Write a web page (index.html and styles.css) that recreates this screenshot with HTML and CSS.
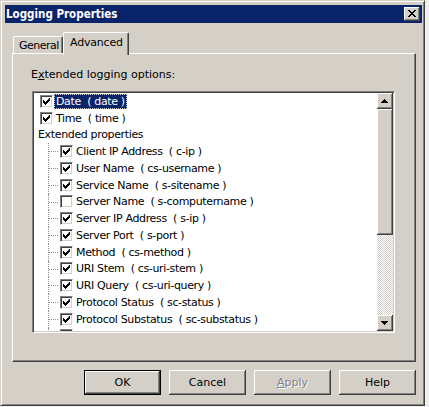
FILE: index.html
```html
<!DOCTYPE html>
<html>
<head>
<meta charset="utf-8">
<link rel="stylesheet" href="styles.css">
</head>
<body>
<svg class="defs" width="0" height="0">
  <symbol id="chk" viewBox="0 0 7 7"><path d="M6 0h1v3h-1v1h-1v1h-1v1h-1v1h-1v-1h-1v-1h-1v-3h1v1h1v1h1v-1h1v-1h1z"/></symbol>
</svg>
<div class="window">
  <div class="titlebar">
    <span class="title">Logging Properties</span>
    <span class="close"><svg width="8" height="7" viewBox="0 0 8 7"><path d="M0 0h2v1h1v1h2v-1h1v-1h2v1h-1v1h-1v1h-1v1h1v1h1v1h1v1h-2v-1h-1v-1h-2v1h-1v1h-2v-1h1v-1h1v-1h1v-1h-1v-1h-1v-1h-1z"/></svg></span>
  </div>
  <div class="content">
    <div class="tabs">
      <div class="tab">General</div>
      <div class="tab active">Advanced</div>
    </div>
    <div class="panel">
      <div class="label">E<u>x</u>tended logging options:</div>
      <div class="treebox">
        <div class="tree">
          <div class="row top"><span class="cb"><svg><use href="#chk"/></svg></span><span class="txt sel">Date  ( date )</span></div>
          <div class="row top"><span class="cb"><svg><use href="#chk"/></svg></span><span class="txt">Time  ( time )</span></div>
          <div class="row group"><span class="txt">Extended properties</span></div>
          <div class="row child"><span class="cb"><svg><use href="#chk"/></svg></span><span class="txt">Client IP Address  ( c-ip )</span></div>
          <div class="row child"><span class="cb"><svg><use href="#chk"/></svg></span><span class="txt">User Name  ( cs-username )</span></div>
          <div class="row child"><span class="cb"><svg><use href="#chk"/></svg></span><span class="txt">Service Name  ( s-sitename )</span></div>
          <div class="row child"><span class="cb"></span><span class="txt">Server Name  ( s-computername )</span></div>
          <div class="row child"><span class="cb"><svg><use href="#chk"/></svg></span><span class="txt">Server IP Address  ( s-ip )</span></div>
          <div class="row child"><span class="cb"><svg><use href="#chk"/></svg></span><span class="txt">Server Port  ( s-port )</span></div>
          <div class="row child"><span class="cb"><svg><use href="#chk"/></svg></span><span class="txt">Method  ( cs-method )</span></div>
          <div class="row child"><span class="cb"><svg><use href="#chk"/></svg></span><span class="txt">URI Stem  ( cs-uri-stem )</span></div>
          <div class="row child"><span class="cb"><svg><use href="#chk"/></svg></span><span class="txt">URI Query  ( cs-uri-query )</span></div>
          <div class="row child"><span class="cb"><svg><use href="#chk"/></svg></span><span class="txt">Protocol Status  ( sc-status )</span></div>
          <div class="row child"><span class="cb"><svg><use href="#chk"/></svg></span><span class="txt">Protocol Substatus  ( sc-substatus )</span></div>
          <div class="row child"><span class="cb"><svg><use href="#chk"/></svg></span><span class="txt">Win32 Status  ( sc-win32-status )</span></div>
        </div>
        <div class="scrollbar">
          <div class="sbtn"><svg width="7" height="4" viewBox="0 0 7 4"><path d="M3 0h1v1h1v1h1v1h1v1H0V3h1V2h1V1h1z"/></svg></div>
          <div class="thumb"></div>
          <div class="track"></div>
          <div class="sbtn"><svg width="7" height="4" viewBox="0 0 7 4"><path d="M0 0h7v1h-1v1h-1v1h-1v1h-1v-1h-1v-1h-1v-1h-1z"/></svg></div>
        </div>
      </div>
    </div>
    <div class="buttons">
      <div class="btn default">OK</div>
      <div class="btn">Cancel</div>
      <div class="btn disabled"><span><u>A</u>pply</span></div>
      <div class="btn">Help</div>
    </div>
  </div>
</div>
</body>
</html>
```
FILE: styles.css
```css
html, body {
  margin: 0;
  background: #efefef;
  font-family: "DejaVu Sans", sans-serif;
  font-size: 11px;
  color: #000;
}
.defs { position: absolute; }
.window {
  box-sizing: border-box;
  width: 425px;
  height: 406px;
  background: #d4d0c8;
  border-top: 1px solid #d4d0c8;
  border-left: 1px solid #d4d0c8;
  border-right: 1px solid #404040;
  border-bottom: 1px solid #404040;
  box-shadow: inset 1px 1px #ffffff, inset -1px -1px #808080;
  padding: 4px 2px 0 4px;
}
.titlebar {
  height: 18px;
  background: #0a246a;
  display: flex;
  align-items: center;
  justify-content: space-between;
  padding: 0 2px 0 1px;
}
.title {
  color: #fff;
  font-weight: bold;
  font-size: 11.5px;
  font-family: "DejaVu Sans Condensed", "DejaVu Sans", sans-serif;
}
.close {
  box-sizing: border-box;
  width: 16px;
  height: 14px;
  background: #d4d0c8;
  box-shadow: inset -1px -1px #404040, inset 1px 1px #fff, inset -2px -2px #808080;
  display: flex;
  align-items: center;
  justify-content: center;
  padding: 0 1px 1px 0;
}
.content {
  padding: 0 6px 0 7px;
}
.tabs {
  height: 30px;
  display: flex;
  align-items: flex-end;
  padding-left: 1px;
}
.tab {
  box-sizing: border-box;
  height: 17px;
  width: 50px;
  border-top: 1px solid #fff;
  border-left: 1px solid #fff;
  border-right: 1px solid #404040;
  box-shadow: inset -1px 0 #808080;
  border-top-left-radius: 2px;
  border-top-right-radius: 2px;
  padding: 2px 0 0 5px;
  line-height: 13px;
  letter-spacing: -0.5px;
  white-space: nowrap;
}
.tab.active {
  width: 66px;
  height: 23px;
  margin-bottom: -2px;
  position: relative;
  z-index: 1;
  background: #d4d0c8;
  padding: 3px 0 0 6px;
  letter-spacing: -0.2px;
}
.panel {
  box-sizing: border-box;
  height: 309px;
  border-top: 1px solid #fff;
  border-left: 1px solid #fff;
  border-right: 1px solid #404040;
  border-bottom: 1px solid #404040;
  box-shadow: inset -1px -1px #808080;
  padding: 14px 0 0 18px;
}
.label {
  height: 14px;
  line-height: 14px;
}
.treebox {
  box-sizing: border-box;
  margin: 9px 0 0 1px;
  width: 363px;
  height: 242px;
  background: #fff;
  border-top: 1px solid #808080;
  border-left: 1px solid #808080;
  border-right: 1px solid #fff;
  border-bottom: 1px solid #fff;
  box-shadow: inset 1px 1px #404040, inset -1px -1px #d4d0c8;
  padding: 1px;
  display: flex;
}
.tree {
  flex: 1;
  overflow: hidden;
}
.row {
  height: 16.75px;
  display: flex;
  align-items: center;
  position: relative;
  white-space: pre;
  letter-spacing: -0.35px;
}
.row.top { padding-left: 6px; }
.row.group { padding-left: 2px; }
.row.child { padding-left: 26px; }
.row.child::before {
  content: "";
  position: absolute;
  left: 14px;
  top: 0;
  bottom: 0;
  border-left: 1px dotted #909090;
}
.row.child::after {
  content: "";
  position: absolute;
  left: 15px;
  width: 9px;
  top: 8px;
  border-top: 1px dotted #909090;
}
.cb {
  box-sizing: border-box;
  width: 13px;
  height: 13px;
  flex: none;
  background: #fff;
  border-top: 1px solid #808080;
  border-left: 1px solid #808080;
  border-right: 1px solid #fff;
  border-bottom: 1px solid #fff;
  box-shadow: inset 1px 1px #404040, inset -1px -1px #d4d0c8;
  display: flex;
  align-items: center;
  justify-content: center;
  margin-right: 1px;
}
.cb svg {
  width: 7px;
  height: 7px;
}
.txt {
  padding: 0 2px;
  line-height: 15px;
  height: 15px;
}
.txt.sel {
  background: #0a246a;
  color: #fff;
  outline: 1px dotted #d4d0c8;
  outline-offset: -1px;
}
.scrollbar {
  width: 16px;
  display: flex;
  flex-direction: column;
}
.sbtn, .thumb {
  box-sizing: border-box;
  background: #d4d0c8;
  box-shadow: inset -1px -1px #404040, inset 1px 1px #fff, inset -2px -2px #808080;
}
.sbtn {
  height: 16px;
  display: flex;
  align-items: center;
  justify-content: center;
  padding: 0 1px 1px 0;
}
.thumb {
  height: 126px;
}
.track {
  flex: 1;
  background: repeating-conic-gradient(#ffffff 0 25%, #d4d0c8 0 50%) 0 0 / 2px 2px;
}
.buttons {
  margin-top: 8px;
  display: flex;
  justify-content: flex-end;
  gap: 8px;
}
.btn {
  box-sizing: border-box;
  width: 77px;
  height: 25px;
  display: flex;
  align-items: center;
  justify-content: center;
  background: #d4d0c8;
  box-shadow: inset -1px -1px #404040, inset 1px 1px #fff, inset -2px -2px #808080;
}
.btn.default {
  border: 1px solid #000;
}
.btn.disabled {
  color: #808080;
  text-shadow: 1px 1px #fff;
}
```
